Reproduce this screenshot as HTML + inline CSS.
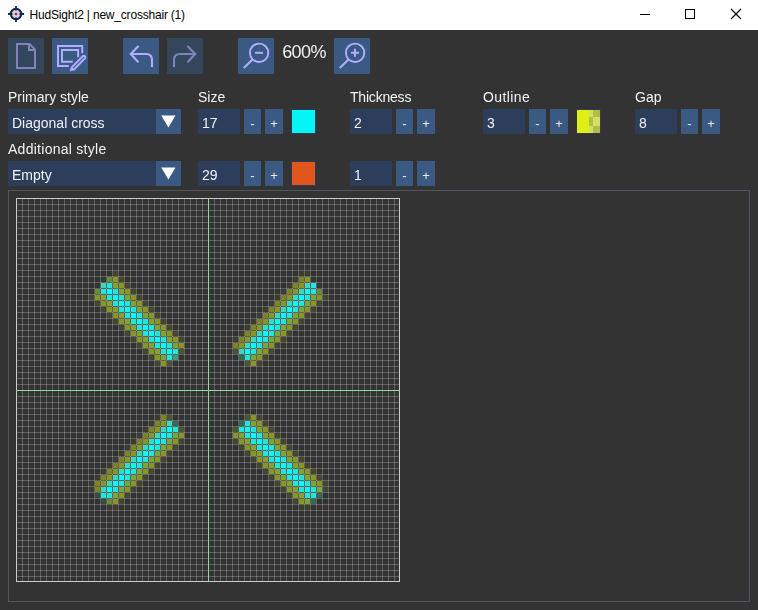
<!DOCTYPE html>
<html><head><meta charset="utf-8"><title>HudSight2 | new_crosshair (1)</title>
<style>
html,body{margin:0;padding:0}
body{width:758px;height:610px;overflow:hidden;background:#333333;position:relative;font-family:"Liberation Sans",sans-serif;color:#f0f0f0}
.abs{position:absolute}
.title{position:absolute;left:0;top:0;width:758px;height:30px;background:#fff;color:#000}
.title .t{position:absolute;left:29.5px;top:7px;font-size:12px;letter-spacing:-0.2px;line-height:16px;white-space:nowrap;color:#000}
.tb{position:absolute;top:38px;width:36px;height:36px;background:#3a5a84}
.tb.dis{background:#34465c}
.tb svg{position:absolute;left:0;top:0}
.lbl{position:absolute;font-size:14px;line-height:18px;white-space:nowrap;color:#f2f2f2;will-change:transform}
.fld{position:absolute;width:42px;height:25px;background:#2d3e5c}
.fld span,.dd span{position:absolute;left:4px;top:5px;font-size:14px;line-height:18px;color:#f2f2f2;white-space:nowrap;will-change:transform}
.pm{position:absolute;height:25px;background:#3a5a84}
.pm span{position:absolute;left:0;right:0;top:6px;text-align:center;font-size:13px;line-height:18px;color:#e8e8f0;will-change:transform}
.sw{position:absolute;width:23px;height:23px;border:1px solid #2b3a58}
.dd{position:absolute;left:8px;width:173px;height:25px;background:#2d3e5c}
.dd .ar{position:absolute;right:0;top:0;width:25px;height:25px;background:#3a5a84}
.zoom{position:absolute;left:274px;width:60px;top:41px;text-align:center;font-size:18px;letter-spacing:-0.6px;line-height:22px;color:#f0f0f0;will-change:transform}
.panel{position:absolute;left:8px;top:190px;width:740px;height:410px;border:1px solid #54545e}
.canvas{position:absolute;left:16px;top:198px}
</style></head><body>
<div class="title">
<svg class="abs" style="left:6px;top:4px" width="20" height="20" viewBox="0 0 20 20">
<circle cx="10" cy="10" r="5.2" fill="#c9d2e4" stroke="#14254a" stroke-width="2"/>
<path d="M10 2V6.5M10 13.5V18M2 10H6.5M13.5 10H18" stroke="#14254a" stroke-width="1.8" fill="none"/>
<circle cx="10" cy="10" r="1.3" fill="#ee1111"/>
</svg>
<div class="t">HudSight2 | new_crosshair (1)</div>
<svg class="abs" style="left:630px;top:0" width="128" height="30" viewBox="630 0 128 30" shape-rendering="crispEdges">
<rect x="640" y="14" width="10" height="1" fill="#000"/>
<rect x="685.5" y="9.5" width="9" height="9" fill="none" stroke="#000" stroke-width="1"/>
<path d="M731 9L741 19M741 9L731 19" stroke="#000" stroke-width="1.1" fill="none" shape-rendering="geometricPrecision"/>
</svg>
</div>

<div class="tb dis" style="left:8px"><svg width="36" height="36" viewBox="0 0 36 36" fill="none" stroke="#8084b8" stroke-width="2">
<path d="M9 6H21.5L27 11.5V30H9Z"/><path d="M21 6V12H27"/></svg></div>
<div class="tb" style="left:52px"><svg width="36" height="36" viewBox="0 0 36 36" fill="none" stroke="#b2aeff">
<path d="M30.2 15.2V7.9H6V27.9H16.8" stroke-width="2"/>
<path d="M26.1 19.2V12.1H10V23.8H20.8" stroke-width="2"/>
<path d="M20.3 28.9L30.75 18.2A1.5 1.5 0 0 1 32.85 20.4L22.5 31" stroke-width="2"/>
<path d="M19.4 28.4L23.1 32L17.9 33Z" fill="#b2aeff" stroke-width="0.5" stroke-linejoin="round"/>
</svg></div>
<div class="tb" style="left:123px"><svg width="36" height="36" viewBox="0 0 36 36" fill="none" stroke="#b2aeff" stroke-width="2.1">
<path d="M15.5 8L7.7 16L15.5 24.3"/><path d="M8 16H23Q29 16 29 22V29"/></svg></div>
<div class="tb dis" style="left:167px"><svg width="36" height="36" viewBox="0 0 36 36" fill="none" stroke="#8084b8" stroke-width="2.1">
<path d="M20.5 8L28.3 16L20.5 24.3"/><path d="M28 16H13Q7 16 7 22V29"/></svg></div>
<div class="tb" style="left:238px"><svg width="36" height="36" viewBox="0 0 36 36" fill="none" stroke="#b2aeff" stroke-width="1.9">
<circle cx="21.1" cy="14.8" r="9.2"/><path d="M14.5 21.5L5.8 30" stroke-width="2.1"/><path d="M17 14.8H25" stroke-width="2"/></svg></div>
<div class="zoom">600%</div>
<div class="tb" style="left:334px"><svg width="36" height="36" viewBox="0 0 36 36" fill="none" stroke="#b2aeff" stroke-width="1.9">
<circle cx="21.1" cy="14.8" r="9.2"/><path d="M14.5 21.5L5.8 30" stroke-width="2.1"/><path d="M17 14.8H25M21 10.8V18.8" stroke-width="2"/></svg></div>

<div class="lbl" style="left:8px;top:88px">Primary style</div>
<div class="lbl" style="left:198px;top:88px">Size</div>
<div class="lbl" style="left:350px;top:88px;letter-spacing:-0.2px">Thickness</div>
<div class="lbl" style="left:483px;top:88px;letter-spacing:0.4px">Outline</div>
<div class="lbl" style="left:635px;top:88px">Gap</div>
<div class="lbl" style="left:8px;top:140px;letter-spacing:0.27px">Additional style</div>

<div class="dd" style="top:109px"><span>Diagonal cross</span><div class="ar"><svg width="25" height="25"><path d="M5.3 6.5H19.5L12.4 18.6Z" fill="#fff"/></svg></div></div>
<div class="dd" style="top:161px"><span>Empty</span><div class="ar"><svg width="25" height="25"><path d="M5.3 6.5H19.5L12.4 18.6Z" fill="#fff"/></svg></div></div>

<div class="fld" style="left:198px;top:109px"><span>17</span></div><div class="pm" style="left:244px;top:109px;width:17px"><span>-</span></div><div class="pm" style="left:265px;top:109px;width:18px"><span>+</span></div><div class="sw" style="left:291px;top:109px;background:#04f6f6"></div>
<div class="fld" style="left:350px;top:109px"><span>2</span></div><div class="pm" style="left:396px;top:109px;width:17px"><span>-</span></div><div class="pm" style="left:417px;top:109px;width:18px"><span>+</span></div>
<div class="fld" style="left:483px;top:109px"><span>3</span></div><div class="pm" style="left:529px;top:109px;width:17px"><span>-</span></div><div class="pm" style="left:550px;top:109px;width:18px"><span>+</span></div><div class="sw" style="left:576px;top:109px;background:#dff010"><svg width="23" height="23" style="position:absolute;left:0;top:0" shape-rendering="crispEdges">
<rect x="12" y="0" width="11" height="23" fill="#d4de62"/>
<rect x="16" y="0" width="7" height="7" fill="#b4bc48"/><rect x="12" y="7" width="4" height="9" fill="#b4bc48"/><rect x="16" y="16" width="7" height="7" fill="#b4bc48"/>
</svg></div>
<div class="fld" style="left:635px;top:109px"><span>8</span></div><div class="pm" style="left:681px;top:109px;width:17px"><span>-</span></div><div class="pm" style="left:702px;top:109px;width:18px"><span>+</span></div>
<div class="fld" style="left:198px;top:161px"><span>29</span></div><div class="pm" style="left:244px;top:161px;width:17px"><span>-</span></div><div class="pm" style="left:265px;top:161px;width:18px"><span>+</span></div><div class="sw" style="left:291px;top:161px;background:#e0561c"></div>
<div class="fld" style="left:350px;top:161px"><span>1</span></div><div class="pm" style="left:396px;top:161px;width:17px"><span>-</span></div><div class="pm" style="left:417px;top:161px;width:18px"><span>+</span></div>

<div class="panel"></div>
<svg class="canvas" width="384" height="384" viewBox="0 0 384 384" shape-rendering="crispEdges">
<defs><pattern id="g" width="6" height="6" patternUnits="userSpaceOnUse">
<rect x="0" y="0" width="6" height="1" fill="#fff" fill-opacity="0.22"/>
<rect x="0" y="0" width="1" height="6" fill="#fff" fill-opacity="0.22"/>
</pattern></defs>
<rect width="384" height="384" fill="#333"/>
<rect width="384" height="384" fill="url(#g)"/>
<rect x="97" y="73" width="5" height="5" fill="#42462e"/>
<rect x="283" y="73" width="5" height="5" fill="#3a3c30"/>
<rect x="289" y="73" width="5" height="5" fill="#3a3c30"/>
<rect x="85" y="79" width="5" height="5" fill="#2f3837"/>
<rect x="91" y="79" width="5" height="5" fill="#6b8a35"/>
<rect x="97" y="79" width="5" height="5" fill="#8a9622"/>
<rect x="103" y="79" width="5" height="5" fill="#42462e"/>
<rect x="277" y="79" width="5" height="5" fill="#3a3c30"/>
<rect x="283" y="79" width="5" height="5" fill="#7e8424"/>
<rect x="289" y="79" width="5" height="5" fill="#8a9622"/>
<rect x="295" y="79" width="5" height="5" fill="#2f3837"/>
<rect x="79" y="85" width="5" height="5" fill="#2f3837"/>
<rect x="85" y="85" width="5" height="5" fill="#3cd8ba"/>
<rect x="91" y="85" width="5" height="5" fill="#1ee8de"/>
<rect x="97" y="85" width="5" height="5" fill="#80a332"/>
<rect x="103" y="85" width="5" height="5" fill="#8a9622"/>
<rect x="109" y="85" width="5" height="5" fill="#42462e"/>
<rect x="271" y="85" width="5" height="5" fill="#3a3c30"/>
<rect x="277" y="85" width="5" height="5" fill="#7e8424"/>
<rect x="283" y="85" width="5" height="5" fill="#8a9622"/>
<rect x="289" y="85" width="5" height="5" fill="#3cd8ba"/>
<rect x="295" y="85" width="5" height="5" fill="#1ee8de"/>
<rect x="301" y="85" width="5" height="5" fill="#2f3837"/>
<rect x="79" y="91" width="5" height="5" fill="#6b8a35"/>
<rect x="85" y="91" width="5" height="5" fill="#1ee8de"/>
<rect x="91" y="91" width="5" height="5" fill="#04fcfc"/>
<rect x="97" y="91" width="5" height="5" fill="#1ee8de"/>
<rect x="103" y="91" width="5" height="5" fill="#80a332"/>
<rect x="109" y="91" width="5" height="5" fill="#8a9622"/>
<rect x="115" y="91" width="5" height="5" fill="#42462e"/>
<rect x="265" y="91" width="5" height="5" fill="#3a3c30"/>
<rect x="271" y="91" width="5" height="5" fill="#7e8424"/>
<rect x="277" y="91" width="5" height="5" fill="#8a9622"/>
<rect x="283" y="91" width="5" height="5" fill="#3cd8ba"/>
<rect x="289" y="91" width="5" height="5" fill="#04fcfc"/>
<rect x="295" y="91" width="5" height="5" fill="#1ee8de"/>
<rect x="301" y="91" width="5" height="5" fill="#6b8a35"/>
<rect x="73" y="97" width="5" height="5" fill="#42462e"/>
<rect x="79" y="97" width="5" height="5" fill="#8a9622"/>
<rect x="85" y="97" width="5" height="5" fill="#80a332"/>
<rect x="91" y="97" width="5" height="5" fill="#1ee8de"/>
<rect x="97" y="97" width="5" height="5" fill="#04fcfc"/>
<rect x="103" y="97" width="5" height="5" fill="#1ee8de"/>
<rect x="109" y="97" width="5" height="5" fill="#80a332"/>
<rect x="115" y="97" width="5" height="5" fill="#8a9622"/>
<rect x="121" y="97" width="5" height="5" fill="#42462e"/>
<rect x="259" y="97" width="5" height="5" fill="#3a3c30"/>
<rect x="265" y="97" width="5" height="5" fill="#7e8424"/>
<rect x="271" y="97" width="5" height="5" fill="#8a9622"/>
<rect x="277" y="97" width="5" height="5" fill="#3cd8ba"/>
<rect x="283" y="97" width="5" height="5" fill="#04fcfc"/>
<rect x="289" y="97" width="5" height="5" fill="#1ee8de"/>
<rect x="295" y="97" width="5" height="5" fill="#76a840"/>
<rect x="301" y="97" width="5" height="5" fill="#8a9622"/>
<rect x="307" y="97" width="5" height="5" fill="#42462e"/>
<rect x="79" y="103" width="5" height="5" fill="#42462e"/>
<rect x="85" y="103" width="5" height="5" fill="#8a9622"/>
<rect x="91" y="103" width="5" height="5" fill="#80a332"/>
<rect x="97" y="103" width="5" height="5" fill="#1ee8de"/>
<rect x="103" y="103" width="5" height="5" fill="#04fcfc"/>
<rect x="109" y="103" width="5" height="5" fill="#1ee8de"/>
<rect x="115" y="103" width="5" height="5" fill="#80a332"/>
<rect x="121" y="103" width="5" height="5" fill="#8a9622"/>
<rect x="127" y="103" width="5" height="5" fill="#42462e"/>
<rect x="253" y="103" width="5" height="5" fill="#3a3c30"/>
<rect x="259" y="103" width="5" height="5" fill="#7e8424"/>
<rect x="265" y="103" width="5" height="5" fill="#8a9622"/>
<rect x="271" y="103" width="5" height="5" fill="#3cd8ba"/>
<rect x="277" y="103" width="5" height="5" fill="#04fcfc"/>
<rect x="283" y="103" width="5" height="5" fill="#1ee8de"/>
<rect x="289" y="103" width="5" height="5" fill="#76a840"/>
<rect x="295" y="103" width="5" height="5" fill="#8a9622"/>
<rect x="301" y="103" width="5" height="5" fill="#42462e"/>
<rect x="85" y="109" width="5" height="5" fill="#42462e"/>
<rect x="91" y="109" width="5" height="5" fill="#8a9622"/>
<rect x="97" y="109" width="5" height="5" fill="#80a332"/>
<rect x="103" y="109" width="5" height="5" fill="#1ee8de"/>
<rect x="109" y="109" width="5" height="5" fill="#04fcfc"/>
<rect x="115" y="109" width="5" height="5" fill="#1ee8de"/>
<rect x="121" y="109" width="5" height="5" fill="#80a332"/>
<rect x="127" y="109" width="5" height="5" fill="#8a9622"/>
<rect x="133" y="109" width="5" height="5" fill="#42462e"/>
<rect x="247" y="109" width="5" height="5" fill="#3a3c30"/>
<rect x="253" y="109" width="5" height="5" fill="#7e8424"/>
<rect x="259" y="109" width="5" height="5" fill="#8a9622"/>
<rect x="265" y="109" width="5" height="5" fill="#3cd8ba"/>
<rect x="271" y="109" width="5" height="5" fill="#04fcfc"/>
<rect x="277" y="109" width="5" height="5" fill="#1ee8de"/>
<rect x="283" y="109" width="5" height="5" fill="#76a840"/>
<rect x="289" y="109" width="5" height="5" fill="#8a9622"/>
<rect x="295" y="109" width="5" height="5" fill="#42462e"/>
<rect x="91" y="115" width="5" height="5" fill="#42462e"/>
<rect x="97" y="115" width="5" height="5" fill="#8a9622"/>
<rect x="103" y="115" width="5" height="5" fill="#80a332"/>
<rect x="109" y="115" width="5" height="5" fill="#1ee8de"/>
<rect x="115" y="115" width="5" height="5" fill="#04fcfc"/>
<rect x="121" y="115" width="5" height="5" fill="#1ee8de"/>
<rect x="127" y="115" width="5" height="5" fill="#80a332"/>
<rect x="133" y="115" width="5" height="5" fill="#8a9622"/>
<rect x="139" y="115" width="5" height="5" fill="#42462e"/>
<rect x="241" y="115" width="5" height="5" fill="#3a3c30"/>
<rect x="247" y="115" width="5" height="5" fill="#7e8424"/>
<rect x="253" y="115" width="5" height="5" fill="#8a9622"/>
<rect x="259" y="115" width="5" height="5" fill="#3cd8ba"/>
<rect x="265" y="115" width="5" height="5" fill="#04fcfc"/>
<rect x="271" y="115" width="5" height="5" fill="#1ee8de"/>
<rect x="277" y="115" width="5" height="5" fill="#76a840"/>
<rect x="283" y="115" width="5" height="5" fill="#8a9622"/>
<rect x="289" y="115" width="5" height="5" fill="#42462e"/>
<rect x="97" y="121" width="5" height="5" fill="#42462e"/>
<rect x="103" y="121" width="5" height="5" fill="#8a9622"/>
<rect x="109" y="121" width="5" height="5" fill="#80a332"/>
<rect x="115" y="121" width="5" height="5" fill="#1ee8de"/>
<rect x="121" y="121" width="5" height="5" fill="#04fcfc"/>
<rect x="127" y="121" width="5" height="5" fill="#1ee8de"/>
<rect x="133" y="121" width="5" height="5" fill="#80a332"/>
<rect x="139" y="121" width="5" height="5" fill="#8a9622"/>
<rect x="145" y="121" width="5" height="5" fill="#42462e"/>
<rect x="235" y="121" width="5" height="5" fill="#3a3c30"/>
<rect x="241" y="121" width="5" height="5" fill="#7e8424"/>
<rect x="247" y="121" width="5" height="5" fill="#8a9622"/>
<rect x="253" y="121" width="5" height="5" fill="#3cd8ba"/>
<rect x="259" y="121" width="5" height="5" fill="#04fcfc"/>
<rect x="265" y="121" width="5" height="5" fill="#1ee8de"/>
<rect x="271" y="121" width="5" height="5" fill="#76a840"/>
<rect x="277" y="121" width="5" height="5" fill="#8a9622"/>
<rect x="283" y="121" width="5" height="5" fill="#42462e"/>
<rect x="103" y="127" width="5" height="5" fill="#42462e"/>
<rect x="109" y="127" width="5" height="5" fill="#8a9622"/>
<rect x="115" y="127" width="5" height="5" fill="#80a332"/>
<rect x="121" y="127" width="5" height="5" fill="#1ee8de"/>
<rect x="127" y="127" width="5" height="5" fill="#04fcfc"/>
<rect x="133" y="127" width="5" height="5" fill="#1ee8de"/>
<rect x="139" y="127" width="5" height="5" fill="#80a332"/>
<rect x="145" y="127" width="5" height="5" fill="#8a9622"/>
<rect x="151" y="127" width="5" height="5" fill="#42462e"/>
<rect x="229" y="127" width="5" height="5" fill="#3a3c30"/>
<rect x="235" y="127" width="5" height="5" fill="#7e8424"/>
<rect x="241" y="127" width="5" height="5" fill="#8a9622"/>
<rect x="247" y="127" width="5" height="5" fill="#3cd8ba"/>
<rect x="253" y="127" width="5" height="5" fill="#04fcfc"/>
<rect x="259" y="127" width="5" height="5" fill="#1ee8de"/>
<rect x="265" y="127" width="5" height="5" fill="#76a840"/>
<rect x="271" y="127" width="5" height="5" fill="#8a9622"/>
<rect x="277" y="127" width="5" height="5" fill="#42462e"/>
<rect x="109" y="133" width="5" height="5" fill="#42462e"/>
<rect x="115" y="133" width="5" height="5" fill="#8a9622"/>
<rect x="121" y="133" width="5" height="5" fill="#80a332"/>
<rect x="127" y="133" width="5" height="5" fill="#1ee8de"/>
<rect x="133" y="133" width="5" height="5" fill="#04fcfc"/>
<rect x="139" y="133" width="5" height="5" fill="#1ee8de"/>
<rect x="145" y="133" width="5" height="5" fill="#80a332"/>
<rect x="151" y="133" width="5" height="5" fill="#8a9622"/>
<rect x="157" y="133" width="5" height="5" fill="#42462e"/>
<rect x="223" y="133" width="5" height="5" fill="#3a3c30"/>
<rect x="229" y="133" width="5" height="5" fill="#7e8424"/>
<rect x="235" y="133" width="5" height="5" fill="#8a9622"/>
<rect x="241" y="133" width="5" height="5" fill="#3cd8ba"/>
<rect x="247" y="133" width="5" height="5" fill="#04fcfc"/>
<rect x="253" y="133" width="5" height="5" fill="#1ee8de"/>
<rect x="259" y="133" width="5" height="5" fill="#76a840"/>
<rect x="265" y="133" width="5" height="5" fill="#8a9622"/>
<rect x="271" y="133" width="5" height="5" fill="#42462e"/>
<rect x="115" y="139" width="5" height="5" fill="#42462e"/>
<rect x="121" y="139" width="5" height="5" fill="#8a9622"/>
<rect x="127" y="139" width="5" height="5" fill="#80a332"/>
<rect x="133" y="139" width="5" height="5" fill="#1ee8de"/>
<rect x="139" y="139" width="5" height="5" fill="#04fcfc"/>
<rect x="145" y="139" width="5" height="5" fill="#1ee8de"/>
<rect x="151" y="139" width="5" height="5" fill="#80a332"/>
<rect x="157" y="139" width="5" height="5" fill="#8a9622"/>
<rect x="163" y="139" width="5" height="5" fill="#42462e"/>
<rect x="217" y="139" width="5" height="5" fill="#3a3c30"/>
<rect x="223" y="139" width="5" height="5" fill="#7e8424"/>
<rect x="229" y="139" width="5" height="5" fill="#8a9622"/>
<rect x="235" y="139" width="5" height="5" fill="#3cd8ba"/>
<rect x="241" y="139" width="5" height="5" fill="#04fcfc"/>
<rect x="247" y="139" width="5" height="5" fill="#1ee8de"/>
<rect x="253" y="139" width="5" height="5" fill="#76a840"/>
<rect x="259" y="139" width="5" height="5" fill="#8a9622"/>
<rect x="265" y="139" width="5" height="5" fill="#42462e"/>
<rect x="121" y="145" width="5" height="5" fill="#42462e"/>
<rect x="127" y="145" width="5" height="5" fill="#8a9622"/>
<rect x="133" y="145" width="5" height="5" fill="#80a332"/>
<rect x="139" y="145" width="5" height="5" fill="#1ee8de"/>
<rect x="145" y="145" width="5" height="5" fill="#04fcfc"/>
<rect x="151" y="145" width="5" height="5" fill="#1ee8de"/>
<rect x="157" y="145" width="5" height="5" fill="#80a332"/>
<rect x="163" y="145" width="5" height="5" fill="#8a9622"/>
<rect x="217" y="145" width="5" height="5" fill="#7e8424"/>
<rect x="223" y="145" width="5" height="5" fill="#8a9622"/>
<rect x="229" y="145" width="5" height="5" fill="#3cd8ba"/>
<rect x="235" y="145" width="5" height="5" fill="#04fcfc"/>
<rect x="241" y="145" width="5" height="5" fill="#1ee8de"/>
<rect x="247" y="145" width="5" height="5" fill="#76a840"/>
<rect x="253" y="145" width="5" height="5" fill="#8a9622"/>
<rect x="259" y="145" width="5" height="5" fill="#42462e"/>
<rect x="127" y="151" width="5" height="5" fill="#42462e"/>
<rect x="133" y="151" width="5" height="5" fill="#8a9622"/>
<rect x="139" y="151" width="5" height="5" fill="#80a332"/>
<rect x="145" y="151" width="5" height="5" fill="#1ee8de"/>
<rect x="151" y="151" width="5" height="5" fill="#04fcfc"/>
<rect x="157" y="151" width="5" height="5" fill="#1ee8de"/>
<rect x="163" y="151" width="5" height="5" fill="#4a5530"/>
<rect x="217" y="151" width="5" height="5" fill="#4a5530"/>
<rect x="223" y="151" width="5" height="5" fill="#3cd8ba"/>
<rect x="229" y="151" width="5" height="5" fill="#04fcfc"/>
<rect x="235" y="151" width="5" height="5" fill="#1ee8de"/>
<rect x="241" y="151" width="5" height="5" fill="#76a840"/>
<rect x="247" y="151" width="5" height="5" fill="#8a9622"/>
<rect x="253" y="151" width="5" height="5" fill="#42462e"/>
<rect x="133" y="157" width="5" height="5" fill="#42462e"/>
<rect x="139" y="157" width="5" height="5" fill="#8a9622"/>
<rect x="145" y="157" width="5" height="5" fill="#80a332"/>
<rect x="151" y="157" width="5" height="5" fill="#1ee8de"/>
<rect x="157" y="157" width="5" height="5" fill="#35a080"/>
<rect x="223" y="157" width="5" height="5" fill="#2f6a5a"/>
<rect x="229" y="157" width="5" height="5" fill="#1ee8de"/>
<rect x="235" y="157" width="5" height="5" fill="#76a840"/>
<rect x="241" y="157" width="5" height="5" fill="#8a9622"/>
<rect x="247" y="157" width="5" height="5" fill="#42462e"/>
<rect x="139" y="163" width="5" height="5" fill="#42462e"/>
<rect x="145" y="163" width="5" height="5" fill="#8a9622"/>
<rect x="151" y="163" width="5" height="5" fill="#4a5530"/>
<rect x="229" y="163" width="5" height="5" fill="#4a5530"/>
<rect x="235" y="163" width="5" height="5" fill="#8a9622"/>
<rect x="241" y="163" width="5" height="5" fill="#42462e"/>
<rect x="139" y="217" width="5" height="5" fill="#3a3c30"/>
<rect x="145" y="217" width="5" height="5" fill="#7e8424"/>
<rect x="151" y="217" width="5" height="5" fill="#4a5530"/>
<rect x="229" y="217" width="5" height="5" fill="#4a5530"/>
<rect x="235" y="217" width="5" height="5" fill="#8a9622"/>
<rect x="241" y="217" width="5" height="5" fill="#42462e"/>
<rect x="133" y="223" width="5" height="5" fill="#3a3c30"/>
<rect x="139" y="223" width="5" height="5" fill="#7e8424"/>
<rect x="145" y="223" width="5" height="5" fill="#8a9622"/>
<rect x="151" y="223" width="5" height="5" fill="#3cd8ba"/>
<rect x="157" y="223" width="5" height="5" fill="#2f6a5a"/>
<rect x="223" y="223" width="5" height="5" fill="#2f6a5a"/>
<rect x="229" y="223" width="5" height="5" fill="#1ee8de"/>
<rect x="235" y="223" width="5" height="5" fill="#80a332"/>
<rect x="241" y="223" width="5" height="5" fill="#8a9622"/>
<rect x="247" y="223" width="5" height="5" fill="#42462e"/>
<rect x="127" y="229" width="5" height="5" fill="#3a3c30"/>
<rect x="133" y="229" width="5" height="5" fill="#7e8424"/>
<rect x="139" y="229" width="5" height="5" fill="#8a9622"/>
<rect x="145" y="229" width="5" height="5" fill="#3cd8ba"/>
<rect x="151" y="229" width="5" height="5" fill="#04fcfc"/>
<rect x="157" y="229" width="5" height="5" fill="#1ee8de"/>
<rect x="163" y="229" width="5" height="5" fill="#4a5530"/>
<rect x="217" y="229" width="5" height="5" fill="#4a5530"/>
<rect x="223" y="229" width="5" height="5" fill="#1ee8de"/>
<rect x="229" y="229" width="5" height="5" fill="#04fcfc"/>
<rect x="235" y="229" width="5" height="5" fill="#1ee8de"/>
<rect x="241" y="229" width="5" height="5" fill="#80a332"/>
<rect x="247" y="229" width="5" height="5" fill="#8a9622"/>
<rect x="253" y="229" width="5" height="5" fill="#42462e"/>
<rect x="121" y="235" width="5" height="5" fill="#3a3c30"/>
<rect x="127" y="235" width="5" height="5" fill="#7e8424"/>
<rect x="133" y="235" width="5" height="5" fill="#8a9622"/>
<rect x="139" y="235" width="5" height="5" fill="#3cd8ba"/>
<rect x="145" y="235" width="5" height="5" fill="#04fcfc"/>
<rect x="151" y="235" width="5" height="5" fill="#1ee8de"/>
<rect x="157" y="235" width="5" height="5" fill="#76a840"/>
<rect x="163" y="235" width="5" height="5" fill="#8a9622"/>
<rect x="217" y="235" width="5" height="5" fill="#8a9622"/>
<rect x="223" y="235" width="5" height="5" fill="#80a332"/>
<rect x="229" y="235" width="5" height="5" fill="#1ee8de"/>
<rect x="235" y="235" width="5" height="5" fill="#04fcfc"/>
<rect x="241" y="235" width="5" height="5" fill="#1ee8de"/>
<rect x="247" y="235" width="5" height="5" fill="#80a332"/>
<rect x="253" y="235" width="5" height="5" fill="#8a9622"/>
<rect x="259" y="235" width="5" height="5" fill="#42462e"/>
<rect x="115" y="241" width="5" height="5" fill="#3a3c30"/>
<rect x="121" y="241" width="5" height="5" fill="#7e8424"/>
<rect x="127" y="241" width="5" height="5" fill="#8a9622"/>
<rect x="133" y="241" width="5" height="5" fill="#3cd8ba"/>
<rect x="139" y="241" width="5" height="5" fill="#04fcfc"/>
<rect x="145" y="241" width="5" height="5" fill="#1ee8de"/>
<rect x="151" y="241" width="5" height="5" fill="#76a840"/>
<rect x="157" y="241" width="5" height="5" fill="#8a9622"/>
<rect x="163" y="241" width="5" height="5" fill="#42462e"/>
<rect x="217" y="241" width="5" height="5" fill="#42462e"/>
<rect x="223" y="241" width="5" height="5" fill="#8a9622"/>
<rect x="229" y="241" width="5" height="5" fill="#80a332"/>
<rect x="235" y="241" width="5" height="5" fill="#1ee8de"/>
<rect x="241" y="241" width="5" height="5" fill="#04fcfc"/>
<rect x="247" y="241" width="5" height="5" fill="#1ee8de"/>
<rect x="253" y="241" width="5" height="5" fill="#80a332"/>
<rect x="259" y="241" width="5" height="5" fill="#8a9622"/>
<rect x="265" y="241" width="5" height="5" fill="#42462e"/>
<rect x="109" y="247" width="5" height="5" fill="#3a3c30"/>
<rect x="115" y="247" width="5" height="5" fill="#7e8424"/>
<rect x="121" y="247" width="5" height="5" fill="#8a9622"/>
<rect x="127" y="247" width="5" height="5" fill="#3cd8ba"/>
<rect x="133" y="247" width="5" height="5" fill="#04fcfc"/>
<rect x="139" y="247" width="5" height="5" fill="#1ee8de"/>
<rect x="145" y="247" width="5" height="5" fill="#76a840"/>
<rect x="151" y="247" width="5" height="5" fill="#8a9622"/>
<rect x="157" y="247" width="5" height="5" fill="#42462e"/>
<rect x="223" y="247" width="5" height="5" fill="#42462e"/>
<rect x="229" y="247" width="5" height="5" fill="#8a9622"/>
<rect x="235" y="247" width="5" height="5" fill="#80a332"/>
<rect x="241" y="247" width="5" height="5" fill="#1ee8de"/>
<rect x="247" y="247" width="5" height="5" fill="#04fcfc"/>
<rect x="253" y="247" width="5" height="5" fill="#1ee8de"/>
<rect x="259" y="247" width="5" height="5" fill="#80a332"/>
<rect x="265" y="247" width="5" height="5" fill="#8a9622"/>
<rect x="271" y="247" width="5" height="5" fill="#42462e"/>
<rect x="103" y="253" width="5" height="5" fill="#3a3c30"/>
<rect x="109" y="253" width="5" height="5" fill="#7e8424"/>
<rect x="115" y="253" width="5" height="5" fill="#8a9622"/>
<rect x="121" y="253" width="5" height="5" fill="#3cd8ba"/>
<rect x="127" y="253" width="5" height="5" fill="#04fcfc"/>
<rect x="133" y="253" width="5" height="5" fill="#1ee8de"/>
<rect x="139" y="253" width="5" height="5" fill="#76a840"/>
<rect x="145" y="253" width="5" height="5" fill="#8a9622"/>
<rect x="151" y="253" width="5" height="5" fill="#42462e"/>
<rect x="229" y="253" width="5" height="5" fill="#42462e"/>
<rect x="235" y="253" width="5" height="5" fill="#8a9622"/>
<rect x="241" y="253" width="5" height="5" fill="#80a332"/>
<rect x="247" y="253" width="5" height="5" fill="#1ee8de"/>
<rect x="253" y="253" width="5" height="5" fill="#04fcfc"/>
<rect x="259" y="253" width="5" height="5" fill="#1ee8de"/>
<rect x="265" y="253" width="5" height="5" fill="#80a332"/>
<rect x="271" y="253" width="5" height="5" fill="#8a9622"/>
<rect x="277" y="253" width="5" height="5" fill="#42462e"/>
<rect x="97" y="259" width="5" height="5" fill="#3a3c30"/>
<rect x="103" y="259" width="5" height="5" fill="#7e8424"/>
<rect x="109" y="259" width="5" height="5" fill="#8a9622"/>
<rect x="115" y="259" width="5" height="5" fill="#3cd8ba"/>
<rect x="121" y="259" width="5" height="5" fill="#04fcfc"/>
<rect x="127" y="259" width="5" height="5" fill="#1ee8de"/>
<rect x="133" y="259" width="5" height="5" fill="#76a840"/>
<rect x="139" y="259" width="5" height="5" fill="#8a9622"/>
<rect x="145" y="259" width="5" height="5" fill="#42462e"/>
<rect x="235" y="259" width="5" height="5" fill="#42462e"/>
<rect x="241" y="259" width="5" height="5" fill="#8a9622"/>
<rect x="247" y="259" width="5" height="5" fill="#80a332"/>
<rect x="253" y="259" width="5" height="5" fill="#1ee8de"/>
<rect x="259" y="259" width="5" height="5" fill="#04fcfc"/>
<rect x="265" y="259" width="5" height="5" fill="#1ee8de"/>
<rect x="271" y="259" width="5" height="5" fill="#80a332"/>
<rect x="277" y="259" width="5" height="5" fill="#8a9622"/>
<rect x="283" y="259" width="5" height="5" fill="#42462e"/>
<rect x="91" y="265" width="5" height="5" fill="#3a3c30"/>
<rect x="97" y="265" width="5" height="5" fill="#7e8424"/>
<rect x="103" y="265" width="5" height="5" fill="#8a9622"/>
<rect x="109" y="265" width="5" height="5" fill="#3cd8ba"/>
<rect x="115" y="265" width="5" height="5" fill="#04fcfc"/>
<rect x="121" y="265" width="5" height="5" fill="#1ee8de"/>
<rect x="127" y="265" width="5" height="5" fill="#76a840"/>
<rect x="133" y="265" width="5" height="5" fill="#8a9622"/>
<rect x="139" y="265" width="5" height="5" fill="#42462e"/>
<rect x="241" y="265" width="5" height="5" fill="#42462e"/>
<rect x="247" y="265" width="5" height="5" fill="#8a9622"/>
<rect x="253" y="265" width="5" height="5" fill="#80a332"/>
<rect x="259" y="265" width="5" height="5" fill="#1ee8de"/>
<rect x="265" y="265" width="5" height="5" fill="#04fcfc"/>
<rect x="271" y="265" width="5" height="5" fill="#1ee8de"/>
<rect x="277" y="265" width="5" height="5" fill="#80a332"/>
<rect x="283" y="265" width="5" height="5" fill="#8a9622"/>
<rect x="289" y="265" width="5" height="5" fill="#42462e"/>
<rect x="85" y="271" width="5" height="5" fill="#3a3c30"/>
<rect x="91" y="271" width="5" height="5" fill="#7e8424"/>
<rect x="97" y="271" width="5" height="5" fill="#8a9622"/>
<rect x="103" y="271" width="5" height="5" fill="#3cd8ba"/>
<rect x="109" y="271" width="5" height="5" fill="#04fcfc"/>
<rect x="115" y="271" width="5" height="5" fill="#1ee8de"/>
<rect x="121" y="271" width="5" height="5" fill="#76a840"/>
<rect x="127" y="271" width="5" height="5" fill="#8a9622"/>
<rect x="133" y="271" width="5" height="5" fill="#42462e"/>
<rect x="247" y="271" width="5" height="5" fill="#42462e"/>
<rect x="253" y="271" width="5" height="5" fill="#8a9622"/>
<rect x="259" y="271" width="5" height="5" fill="#80a332"/>
<rect x="265" y="271" width="5" height="5" fill="#1ee8de"/>
<rect x="271" y="271" width="5" height="5" fill="#04fcfc"/>
<rect x="277" y="271" width="5" height="5" fill="#1ee8de"/>
<rect x="283" y="271" width="5" height="5" fill="#80a332"/>
<rect x="289" y="271" width="5" height="5" fill="#8a9622"/>
<rect x="295" y="271" width="5" height="5" fill="#42462e"/>
<rect x="79" y="277" width="5" height="5" fill="#3a3c30"/>
<rect x="85" y="277" width="5" height="5" fill="#7e8424"/>
<rect x="91" y="277" width="5" height="5" fill="#8a9622"/>
<rect x="97" y="277" width="5" height="5" fill="#3cd8ba"/>
<rect x="103" y="277" width="5" height="5" fill="#04fcfc"/>
<rect x="109" y="277" width="5" height="5" fill="#1ee8de"/>
<rect x="115" y="277" width="5" height="5" fill="#76a840"/>
<rect x="121" y="277" width="5" height="5" fill="#8a9622"/>
<rect x="127" y="277" width="5" height="5" fill="#42462e"/>
<rect x="253" y="277" width="5" height="5" fill="#42462e"/>
<rect x="259" y="277" width="5" height="5" fill="#8a9622"/>
<rect x="265" y="277" width="5" height="5" fill="#80a332"/>
<rect x="271" y="277" width="5" height="5" fill="#1ee8de"/>
<rect x="277" y="277" width="5" height="5" fill="#04fcfc"/>
<rect x="283" y="277" width="5" height="5" fill="#1ee8de"/>
<rect x="289" y="277" width="5" height="5" fill="#80a332"/>
<rect x="295" y="277" width="5" height="5" fill="#8a9622"/>
<rect x="301" y="277" width="5" height="5" fill="#42462e"/>
<rect x="73" y="283" width="5" height="5" fill="#3a3c30"/>
<rect x="79" y="283" width="5" height="5" fill="#7e8424"/>
<rect x="85" y="283" width="5" height="5" fill="#8a9622"/>
<rect x="91" y="283" width="5" height="5" fill="#3cd8ba"/>
<rect x="97" y="283" width="5" height="5" fill="#04fcfc"/>
<rect x="103" y="283" width="5" height="5" fill="#1ee8de"/>
<rect x="109" y="283" width="5" height="5" fill="#76a840"/>
<rect x="115" y="283" width="5" height="5" fill="#8a9622"/>
<rect x="121" y="283" width="5" height="5" fill="#42462e"/>
<rect x="259" y="283" width="5" height="5" fill="#42462e"/>
<rect x="265" y="283" width="5" height="5" fill="#8a9622"/>
<rect x="271" y="283" width="5" height="5" fill="#80a332"/>
<rect x="277" y="283" width="5" height="5" fill="#1ee8de"/>
<rect x="283" y="283" width="5" height="5" fill="#04fcfc"/>
<rect x="289" y="283" width="5" height="5" fill="#1ee8de"/>
<rect x="295" y="283" width="5" height="5" fill="#80a332"/>
<rect x="301" y="283" width="5" height="5" fill="#8a9622"/>
<rect x="307" y="283" width="5" height="5" fill="#42462e"/>
<rect x="73" y="289" width="5" height="5" fill="#3a3c30"/>
<rect x="79" y="289" width="5" height="5" fill="#7e8424"/>
<rect x="85" y="289" width="5" height="5" fill="#3cd8ba"/>
<rect x="91" y="289" width="5" height="5" fill="#04fcfc"/>
<rect x="97" y="289" width="5" height="5" fill="#1ee8de"/>
<rect x="103" y="289" width="5" height="5" fill="#76a840"/>
<rect x="109" y="289" width="5" height="5" fill="#8a9622"/>
<rect x="115" y="289" width="5" height="5" fill="#42462e"/>
<rect x="265" y="289" width="5" height="5" fill="#42462e"/>
<rect x="271" y="289" width="5" height="5" fill="#8a9622"/>
<rect x="277" y="289" width="5" height="5" fill="#80a332"/>
<rect x="283" y="289" width="5" height="5" fill="#1ee8de"/>
<rect x="289" y="289" width="5" height="5" fill="#04fcfc"/>
<rect x="295" y="289" width="5" height="5" fill="#1ee8de"/>
<rect x="301" y="289" width="5" height="5" fill="#76a840"/>
<rect x="307" y="289" width="5" height="5" fill="#42462e"/>
<rect x="79" y="295" width="5" height="5" fill="#2f4e46"/>
<rect x="85" y="295" width="5" height="5" fill="#1ee8de"/>
<rect x="91" y="295" width="5" height="5" fill="#1ee8de"/>
<rect x="97" y="295" width="5" height="5" fill="#76a840"/>
<rect x="103" y="295" width="5" height="5" fill="#8a9622"/>
<rect x="109" y="295" width="5" height="5" fill="#42462e"/>
<rect x="271" y="295" width="5" height="5" fill="#42462e"/>
<rect x="277" y="295" width="5" height="5" fill="#8a9622"/>
<rect x="283" y="295" width="5" height="5" fill="#80a332"/>
<rect x="289" y="295" width="5" height="5" fill="#1ee8de"/>
<rect x="295" y="295" width="5" height="5" fill="#1ee8de"/>
<rect x="301" y="295" width="5" height="5" fill="#2f6a5a"/>
<rect x="85" y="301" width="5" height="5" fill="#2f4e46"/>
<rect x="91" y="301" width="5" height="5" fill="#6b8a35"/>
<rect x="97" y="301" width="5" height="5" fill="#8a9622"/>
<rect x="103" y="301" width="5" height="5" fill="#42462e"/>
<rect x="277" y="301" width="5" height="5" fill="#42462e"/>
<rect x="283" y="301" width="5" height="5" fill="#8a9622"/>
<rect x="289" y="301" width="5" height="5" fill="#80a332"/>
<rect x="295" y="301" width="5" height="5" fill="#2f6a5a"/>
<rect x="91" y="307" width="5" height="5" fill="#3a3c30"/>
<rect x="97" y="307" width="5" height="5" fill="#3a3c30"/>
<rect x="283" y="307" width="5" height="5" fill="#3a3c30"/>
<rect x="289" y="307" width="5" height="5" fill="#3a3c30"/>
<rect x="192" y="0" width="1" height="384" fill="#90d8a0"/>
<rect x="0" y="192" width="384" height="1" fill="#90d8a0"/>
<rect x="0.5" y="0.5" width="383" height="383" fill="none" stroke="#cbcbcb" stroke-width="1"/>
</svg>
</body></html>
